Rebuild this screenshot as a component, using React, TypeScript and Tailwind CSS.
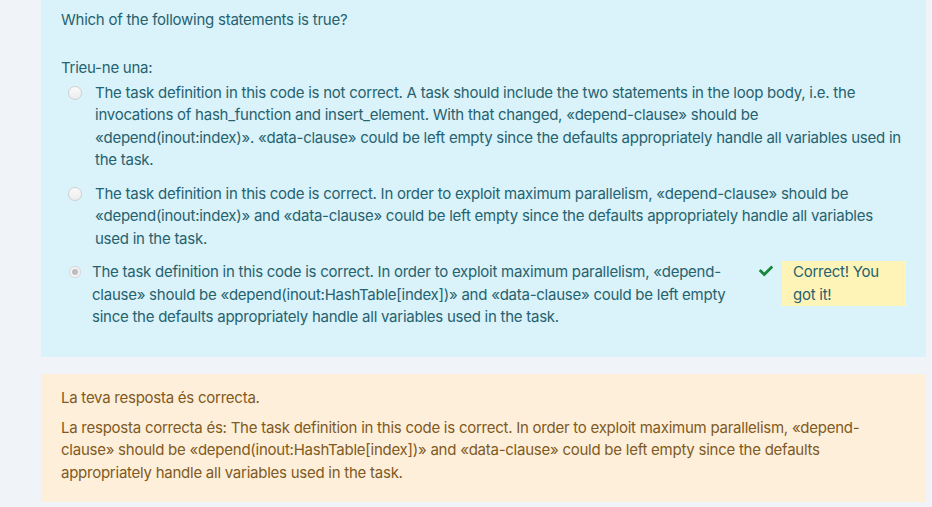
import { FaCheck } from "react-icons/fa";

const options = [
    "The task definition in this code is not correct. A task should include the two statements in the loop body, i.e. the invocations of hash_function and insert_element. With that changed, «depend-clause» should be «depend(inout:index)». «data-clause» could be left empty since the defaults appropriately handle all variables used in the task.",
    "The task definition in this code is correct. In order to exploit maximum parallelism, «depend-clause» should be «depend(inout:index)» and «data-clause» could be left empty since the defaults appropriately handle all variables used in the task.",
];

const correctText =
    "The task definition in this code is correct. In order to exploit maximum parallelism, «depend-clause» should be «depend(inout:HashTable[index])» and «data-clause» could be left empty since the defaults appropriately handle all variables used in the task.";

function Radio({ checked }: { checked?: boolean }) {
    if (checked) {
        return (
            <span className="mt-[5px] ml-[8px] flex h-[12px] w-[12px] shrink-0 items-center justify-center rounded-full border border-[#d6d6d6] bg-[#f4f4f4]">
                <span className="h-[6px] w-[6px] rounded-full bg-[#bdbdbd]" />
            </span>
        );
    }
    return (
        <span className="mt-[4px] ml-[7px] h-[14px] w-[14px] shrink-0 rounded-full border border-[#cfcfcf] bg-gradient-to-b from-[#fafafa] to-[#ececec]" />
    );
}

export default function App() {
    return (
        <div
            className="min-h-screen w-full bg-[#f0f4f9] pl-[41px] pr-[6px] pb-[7px] text-[15px] leading-[22.5px] tracking-[-0.25px]"
            style={{ fontFamily: "Inter, 'Noto Sans', sans-serif" }}
        >
            <div className="bg-[#daf2fa] px-[20px] pt-[9px] pb-[28px] text-[#25626f]">
                <p className="mb-[25px]">Which of the following statements is true?</p>
                <p className="mb-[2.5px]">Trieu-ne una:</p>

                <div className="flex flex-col gap-[11px]">
                    {options.map((text, i) => (
                        <div key={i} className="flex gap-[13px]">
                            <Radio />
                            <div>{text}</div>
                        </div>
                    ))}

                    <div className="flex">
                        <Radio checked />
                        <div className="ml-[11px] w-[645px] shrink-0">{correctText}</div>
                        <FaCheck className="ml-[22px] mt-[3px] h-[14px] w-[14px] shrink-0 text-[#16883a]" />
                        <div className="ml-[9px] h-[45px] w-[124px] shrink-0 bg-[#fff4b8] pl-[11px] pr-[14px]">
                            Correct! You got it!
                        </div>
                    </div>
                </div>
            </div>

            <div className="mt-[17px] bg-[#feefdb] px-[20px] pt-[13px] pb-[18px] text-[#7f5a22]">
                <p className="mb-[7.5px]">La teva resposta és correcta.</p>
                <p>{"La resposta correcta és: " + correctText}</p>
            </div>
        </div>
    );
}
